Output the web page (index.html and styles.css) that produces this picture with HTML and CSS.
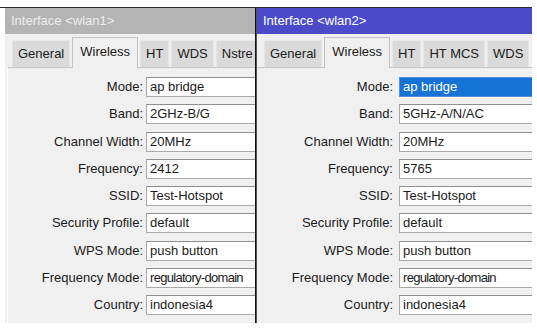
FILE: index.html
```html
<!DOCTYPE html>
<html>
<head>
<meta charset="utf-8">
<link rel="stylesheet" href="styles.css">
</head>
<body>
<div class="screen">
  <div class="win win-1">
    <div class="title">Interface &lt;wlan1&gt;</div>
    <div class="tabs">
      <div class="tab">General</div>
      <div class="tab active">Wireless</div>
      <div class="tab">HT</div>
      <div class="tab">WDS</div>
      <div class="tab last">Nstre</div>
    </div>
    <div class="panel">
      <div class="label">Mode:</div><div class="field">ap bridge</div>
      <div class="label">Band:</div><div class="field">2GHz-B/G</div>
      <div class="label">Channel Width:</div><div class="field">20MHz</div>
      <div class="label">Frequency:</div><div class="field">2412</div>
      <div class="label">SSID:</div><div class="field">Test-Hotspot</div>
      <div class="label">Security Profile:</div><div class="field">default</div>
      <div class="label">WPS Mode:</div><div class="field">push button</div>
      <div class="label">Frequency Mode:</div><div class="field tight">regulatory-domain</div>
      <div class="label">Country:</div><div class="field">indonesia4</div>
    </div>
  </div>
  <div class="win win-2">
    <div class="title">Interface &lt;wlan2&gt;</div>
    <div class="tabs">
      <div class="tab">General</div>
      <div class="tab active">Wireless</div>
      <div class="tab">HT</div>
      <div class="tab">HT MCS</div>
      <div class="tab">WDS</div>
    </div>
    <div class="panel">
      <div class="label">Mode:</div><div class="field selected">ap bridge</div>
      <div class="label">Band:</div><div class="field">5GHz-A/N/AC</div>
      <div class="label">Channel Width:</div><div class="field">20MHz</div>
      <div class="label">Frequency:</div><div class="field">5765</div>
      <div class="label">SSID:</div><div class="field">Test-Hotspot</div>
      <div class="label">Security Profile:</div><div class="field">default</div>
      <div class="label">WPS Mode:</div><div class="field">push button</div>
      <div class="label">Frequency Mode:</div><div class="field tight">regulatory-domain</div>
      <div class="label">Country:</div><div class="field">indonesia4</div>
    </div>
  </div>
</div>
</body>
</html>
```
FILE: styles.css
```css
html, body {
  margin: 0;
  padding: 0;
  background: #ffffff;
}
body {
  width: 537px;
  height: 331px;
  overflow: hidden;
  font-family: "Liberation Sans", Arial, sans-serif;
  font-size: 13px;
  color: #1a1a1a;
}
.screen {
  margin-top: 7px;
  width: 532px;
  border-top: 1px solid #2a2a2a;
  display: flex;
  padding-left: 5px;
  box-sizing: border-box;
}
.win {
  height: 315px;
  overflow: hidden;
  display: flex;
  flex-direction: column;
  background: #f0f0f0;
  box-sizing: border-box;
}
.win-1 {
  width: 251px;
  border-right: 1px solid #111111;
}
.win-2 {
  width: 276px;
  border-left: 1px solid #555555;
}
.title {
  height: 26px;
  line-height: 25px;
  padding-left: 6px;
  white-space: nowrap;
  flex: none;
}
.win-1 .title {
  background: #b4b4b4;
  color: #ededed;
}
.win-2 .title {
  background: #4b4bc9;
  color: #ffffff;
}
.tabs {
  height: 33px;
  flex: none;
  display: flex;
  align-items: flex-end;
  gap: 2px;
  white-space: nowrap;
  background: #f0f0f0;
  padding-left: 7px;
}
.tab {
  height: 27px;
  line-height: 26px;
  padding: 0 5px;
  background: #dadada;
  border: 1px solid #e6e6e6;
  border-bottom: none;
  box-sizing: border-box;
  flex: none;
  color: #1a1a1a;
}
.tab.last {
  padding-right: 12px;
}
.tab.active {
  height: 31px;
  line-height: 27px;
  padding: 0 7px;
  background: #f0f0f0;
  border: 1px solid #c4c4c4;
  border-bottom: none;
  margin-bottom: -1px;
  position: relative;
}
.panel {
  flex: 1;
  border-top: 1px solid #c4c4c4;
  background: #f0f0f0;
  display: grid;
  align-content: start;
  row-gap: 7.25px;
  padding-top: 9px;
}
.win-1 .panel {
  grid-template-columns: 135px 1fr;
  column-gap: 3px;
  border-left: 1px solid #ffffff;
  margin-left: 2px;
}
.win-2 .panel {
  grid-template-columns: 136px 1fr;
  column-gap: 6px;
}
.label {
  height: 20px;
  line-height: 20px;
  text-align: right;
  white-space: nowrap;
}
.field {
  height: 20px;
  line-height: 18px;
  background: #ffffff;
  border: 1px solid #a9a9a9;
  border-top-color: #8e8e8e;
  box-sizing: border-box;
  padding-left: 3px;
  margin-right: -4px;
  white-space: nowrap;
  overflow: hidden;
}
.field.tight {
  letter-spacing: -0.7px;
}
.field.selected {
  background: #1673d6;
  color: #ffffff;
  border-color: #5a8fd0;
}
```
